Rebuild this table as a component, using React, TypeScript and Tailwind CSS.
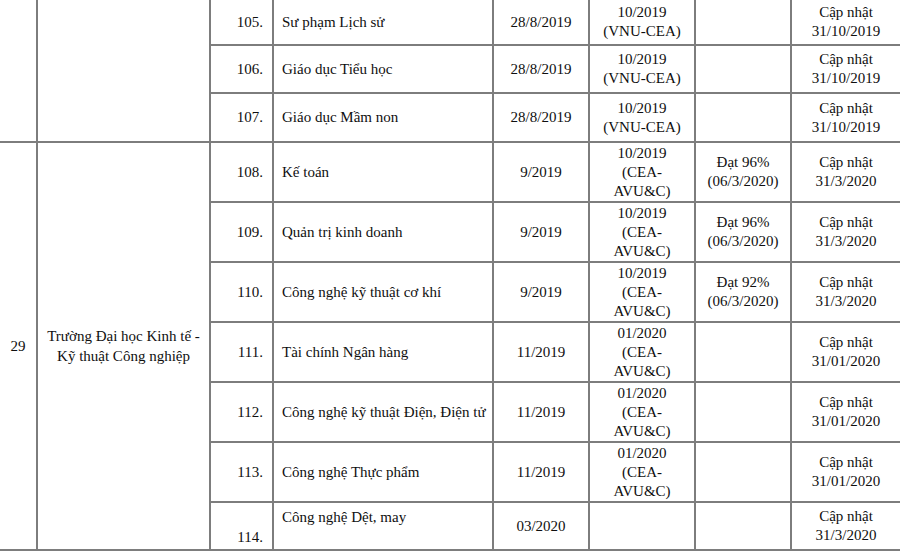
const serif = { fontFamily: '"Liberation Serif", "Times New Roman", serif' };

interface Row {
  no: string;
  name: string;
  start: string;
  eval: string[];
  result: string[];
  note: string[];
  h: string;
}

const prevRows: Row[] = [
  { no: "105.", name: "Sư phạm Lịch sử", start: "28/8/2019", eval: ["10/2019", "(VNU-CEA)"], result: [], note: ["Cập nhật", "31/10/2019"], h: "h-[45px]" },
  { no: "106.", name: "Giáo dục Tiểu học", start: "28/8/2019", eval: ["10/2019", "(VNU-CEA)"], result: [], note: ["Cập nhật", "31/10/2019"], h: "h-[48px]" },
  { no: "107.", name: "Giáo dục Mầm non", start: "28/8/2019", eval: ["10/2019", "(VNU-CEA)"], result: [], note: ["Cập nhật", "31/10/2019"], h: "h-[49px]" },
];

const schoolRows: Row[] = [
  { no: "108.", name: "Kế toán", start: "9/2019", eval: ["10/2019", "(CEA-", "AVU&C)"], result: ["Đạt 96%", "(06/3/2020)"], note: ["Cập nhật", "31/3/2020"], h: "h-[60px]" },
  { no: "109.", name: "Quản trị kinh doanh", start: "9/2019", eval: ["10/2019", "(CEA-", "AVU&C)"], result: ["Đạt 96%", "(06/3/2020)"], note: ["Cập nhật", "31/3/2020"], h: "h-[60px]" },
  { no: "110.", name: "Công nghệ kỹ thuật cơ khí", start: "9/2019", eval: ["10/2019", "(CEA-", "AVU&C)"], result: ["Đạt 92%", "(06/3/2020)"], note: ["Cập nhật", "31/3/2020"], h: "h-[60px]" },
  { no: "111.", name: "Tài chính Ngân hàng", start: "11/2019", eval: ["01/2020", "(CEA-", "AVU&C)"], result: [], note: ["Cập nhật", "31/01/2020"], h: "h-[60px]" },
  { no: "112.", name: "Công nghệ kỹ thuật Điện, Điện tử", start: "11/2019", eval: ["01/2020", "(CEA-", "AVU&C)"], result: [], note: ["Cập nhật", "31/01/2020"], h: "h-[60px]" },
  { no: "113.", name: "Công nghệ Thực phẩm", start: "11/2019", eval: ["01/2020", "(CEA-", "AVU&C)"], result: [], note: ["Cập nhật", "31/01/2020"], h: "h-[60px]" },
];

const line = "border-2 border-[#7d7d7d] p-0";
const cell = `${line} align-middle`;

function Lines({ lines }: { lines: string[] }) {
  return (
    <>
      {lines.map((l, i) => (
        <div key={i}>{l}</div>
      ))}
    </>
  );
}

function Cells({ r }: { r: Row }) {
  return (
    <>
      <td className={`${cell} pr-[9px] text-right`}>{r.no}</td>
      <td className={`${cell} pl-[8px] text-left`}>{r.name}</td>
      <td className={`${cell} text-center`}>{r.start}</td>
      <td className={`${cell} text-center`}>
        <Lines lines={r.eval} />
      </td>
      <td className={`${cell} text-center`}>
        <Lines lines={r.result} />
      </td>
      <td className={`${cell} border-r-0 text-center`}>
        <Lines lines={r.note} />
      </td>
    </>
  );
}

export default function App() {
  return (
    <div className="h-[552px] w-[900px] overflow-hidden bg-white text-[15px] leading-[19px] text-[#0f0f0f]" style={serif}>
      <table className="w-[900px] table-fixed border-collapse">
        <colgroup>
          <col className="w-[37px]" />
          <col className="w-[173px]" />
          <col className="w-[63px]" />
          <col className="w-[220px]" />
          <col className="w-[96px]" />
          <col className="w-[106px]" />
          <col className="w-[96px]" />
          <col className="w-[109px]" />
        </colgroup>
        <tbody>
          {prevRows.map((r, i) => (
            <tr key={r.no} className={r.h}>
              {i === 0 && (
                <>
                  <td rowSpan={3} className={`${cell} border-t-0 border-l-0`} />
                  <td rowSpan={3} className={`${cell} border-t-0`} />
                </>
              )}
              {i === 0 ? (
                <>
                  <td className={`${cell} border-t-0 pr-[9px] text-right`}>{r.no}</td>
                  <td className={`${cell} border-t-0 pl-[8px] text-left`}>{r.name}</td>
                  <td className={`${cell} border-t-0 text-center`}>{r.start}</td>
                  <td className={`${cell} border-t-0 text-center`}>
                    <Lines lines={r.eval} />
                  </td>
                  <td className={`${cell} border-t-0 text-center`} />
                  <td className={`${cell} border-t-0 border-r-0 text-center`}>
                    <Lines lines={r.note} />
                  </td>
                </>
              ) : (
                <Cells r={r} />
              )}
            </tr>
          ))}
          {schoolRows.map((r, i) => (
            <tr key={r.no} className={r.h}>
              {i === 0 && (
                <>
                  <td rowSpan={7} className={`${cell} border-l-0 text-center`}>
                    29
                  </td>
                  <td rowSpan={7} className={`${cell} text-center leading-[20px]`}>
                    <div>Trường Đại học Kinh tế -</div>
                    <div>Kỹ thuật Công nghiệp</div>
                  </td>
                </>
              )}
              <Cells r={r} />
            </tr>
          ))}
          <tr className="h-[48px]">
            <td className={`${line} pr-[9px] pb-[2px] text-right align-bottom`}>114.</td>
            <td className={`${line} pt-[5px] pl-[8px] text-left align-top`}>Công nghệ Dệt, may</td>
            <td className={`${cell} text-center`}>03/2020</td>
            <td className={`${cell} text-center`} />
            <td className={`${cell} text-center`} />
            <td className={`${cell} border-r-0 text-center`}>
              <Lines lines={["Cập nhật", "31/3/2020"]} />
            </td>
          </tr>
        </tbody>
      </table>
    </div>
  );
}
